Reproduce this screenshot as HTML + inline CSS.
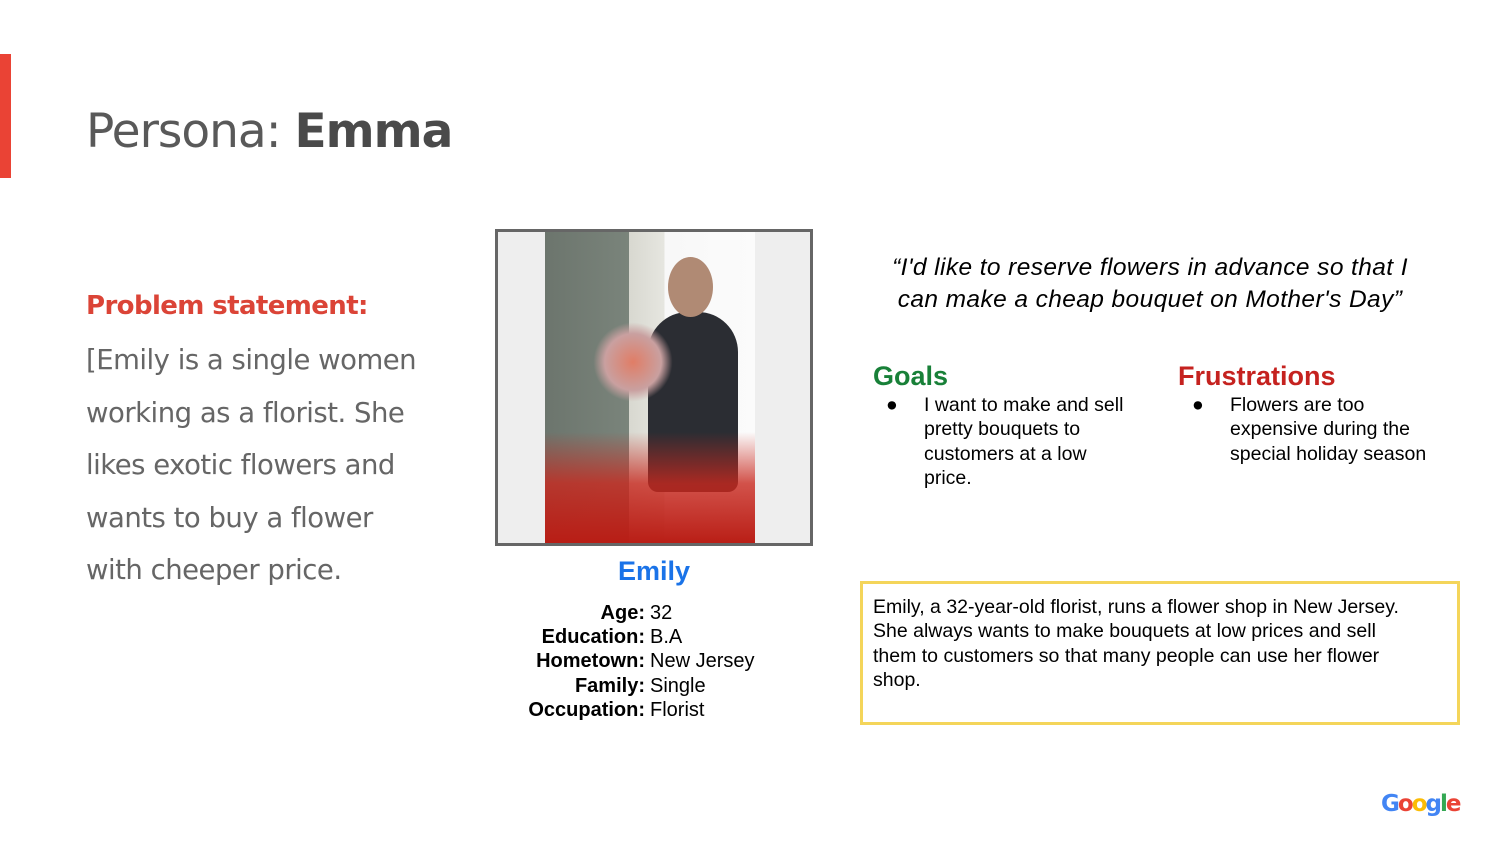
<!DOCTYPE html>
<html><head><meta charset="utf-8"><style>
body{margin:0;width:1500px;height:844px;background:#fff;position:relative;overflow:hidden;font-family:"Liberation Sans",sans-serif}
.a{position:absolute}
</style></head><body>
<div class="a" style="left:0;top:54px;width:11px;height:124px;background:#ea4335"></div>
<div class="a" style="left:86px;top:104px;font-size:47px;color:#595959;font-family:'DejaVu Sans',sans-serif;letter-spacing:-1px">Persona: <b style="color:#4a4a4a">Emma</b></div>
<div class="a" style="left:86px;top:291px;font-size:26px;color:#db4437;font-weight:bold;font-family:'DejaVu Sans',sans-serif;letter-spacing:-0.6px">Problem statement:</div>
<div class="a" style="left:86px;top:334px;font-size:27.5px;line-height:52.5px;color:#666;font-family:'DejaVu Sans',sans-serif;letter-spacing:-0.5px;width:345px">[Emily is a single women working as a florist. She likes exotic flowers and wants to buy a flower with cheeper price.</div>

<div class="a" style="left:495px;top:229px;width:312px;height:311px;border:3px solid #666;background:#eee;overflow:hidden">
 <div class="a" style="left:47px;top:0;width:210px;height:314px;background:linear-gradient(90deg,#6c756d 0%,#7a847b 40%,#d8d8d0 40%,#e6e6e0 57%,#f8f8f8 57%,#fbfbfb 100%)"></div>
 <div class="a" style="left:150px;top:80px;width:90px;height:180px;background:#2b2d33;border-radius:40px 40px 10px 10px"></div>
 <div class="a" style="left:170px;top:25px;width:45px;height:60px;background:#b08a74;border-radius:50%"></div>
 <div class="a" style="left:95px;top:90px;width:80px;height:80px;background:radial-gradient(circle,#e07d66,#c9a0a0 50%,transparent 70%)"></div>
 <div class="a" style="left:47px;top:200px;width:210px;height:114px;background:linear-gradient(180deg,rgba(200,60,50,0) 0%,rgba(200,40,30,.8) 45%,#b81c14 100%)"></div>
</div>
<div class="a" style="left:496px;top:556px;width:316px;text-align:center;font-size:27px;font-weight:bold;color:#1a73e8">Emily</div>
<div class="a" style="left:400px;top:601px;width:245px;text-align:right;font-size:20px;line-height:24.2px;font-weight:bold;color:#000">Age:<br>Education:<br>Hometown:<br>Family:<br>Occupation:</div>
<div class="a" style="left:650px;top:601px;font-size:20px;line-height:24.2px;color:#000">32<br>B.A<br>New Jersey<br>Single<br>Florist</div>

<div class="a" style="left:860px;top:252px;width:580px;text-align:center;font-size:24.5px;letter-spacing:0.4px;line-height:32px;font-style:italic;color:#000">“I'd like to reserve flowers in advance so that I<br>can make a cheap bouquet on Mother's Day”</div>
<div class="a" style="left:873px;top:361px;font-size:27px;font-weight:bold;color:#188038">Goals</div>
<div class="a" style="left:1178px;top:361px;font-size:27px;font-weight:bold;color:#c5221f">Frustrations</div>
<div class="a" style="left:886px;top:393px;font-size:19.5px;line-height:24.3px">●</div>
<div class="a" style="left:924px;top:393px;width:212px;font-size:19.5px;line-height:24.3px">I want to make and sell pretty bouquets to customers at a low price.</div>
<div class="a" style="left:1192px;top:393px;font-size:19.5px;line-height:24.3px">●</div>
<div class="a" style="left:1230px;top:393px;width:215px;font-size:19.5px;line-height:24.3px">Flowers are too expensive during the special holiday season</div>

<div class="a" style="left:860px;top:581px;width:584px;height:138px;border:3px solid #f4d55a;padding:0 0 0 10px;font-size:19.5px;line-height:24.3px;color:#000"><div style="padding-top:11px;width:560px">Emily, a 32-year-old florist, runs a flower shop in New Jersey.<br>She always wants to make bouquets at low prices and sell<br>them to customers so that many people can use her flower<br>shop.</div></div>

<div class="a" style="left:1381px;top:791px;font-size:23px;letter-spacing:-2px;font-family:'DejaVu Sans',sans-serif;font-weight:bold"><span style="color:#4285f4">G</span><span style="color:#ea4335">o</span><span style="color:#fbbc05">o</span><span style="color:#4285f4">g</span><span style="color:#34a853">l</span><span style="color:#ea4335">e</span></div>
</body></html>
